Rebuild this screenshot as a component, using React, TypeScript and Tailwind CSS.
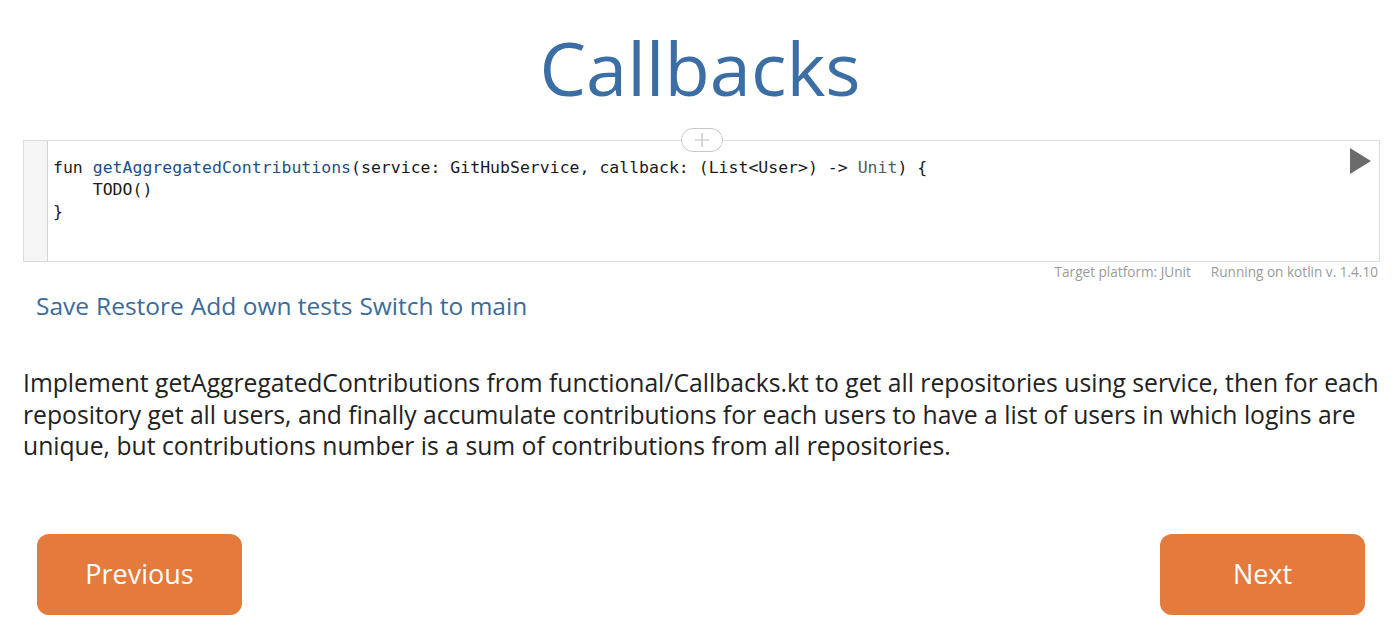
const sans = "font-['Open_Sans',_'Noto_Sans',_sans-serif]";
const mono = "font-['DejaVu_Sans_Mono',_'Liberation_Mono',_monospace]";

function CodeEditor() {
  return (
    <div className="relative">
      <div className="relative flex h-[122px] border border-[#dcdcdc] bg-white">
        {/* gutter */}
        <div className="w-[24px] shrink-0 border-r border-[#d4d4d4] bg-[#f5f5f5]" />
        <pre className={`${mono} pl-[5px] pt-[16px] text-[16.5px] leading-[22px] text-[#1a1a1a]`}>
          <span>fun </span>
          <span className="text-[#1f4f86]">getAggregatedContributions</span>
          <span>(service: GitHubService, callback: (List&lt;User&gt;) -&gt; </span>
          <span className="text-[#555a66]">Unit</span>
          <span>{') {'}</span>
          {'\n    TODO()\n}'}
        </pre>
        {/* run button */}
        <svg className="absolute right-[7px] top-[6px]" width="24" height="28" viewBox="0 0 24 28">
          <polygon points="2,1 23,14 2,27" fill="#6b6b6b" />
        </svg>
      </div>
      {/* add block button */}
      <div className="absolute left-1/2 top-[-12px] flex h-[24px] w-[42px] -translate-x-1/2 items-center justify-center rounded-full border border-[#c8c8c8] bg-white">
        <svg width="16" height="16" viewBox="0 0 16 16">
          <path d="M8 1v14M1 8h14" stroke="#bdbdbd" strokeWidth="1.2" />
        </svg>
      </div>
      <div className={`${sans} mt-[1px] flex justify-end gap-[20px] pr-[2px] text-[13.6px] leading-[18px] text-[#9a9a9a]`}>
        <span>Target platform: JUnit</span>
        <span>Running on kotlin v. 1.4.10</span>
      </div>
    </div>
  );
}

export default function App() {
  return (
    <div className={`${sans} min-h-[634px] w-[1400px] bg-white`}>
      <h1 className="pt-[20px] text-center text-[74px] leading-[96px] text-[#3b6ea5]">Callbacks</h1>

      <div className="mt-[24px] px-[23px] pr-[20px]">
        <CodeEditor />
      </div>

      <div className="mt-[8px] flex gap-[7px] px-[36px] text-[24.5px] leading-[34px] text-[#3a6b9c]">
        <span>Save</span>
        <span>Restore</span>
        <span>Add own tests</span>
        <span>Switch to main</span>
      </div>

      <p className="mt-[44px] pl-[23px] pr-0 text-[24.7px] leading-[31.5px] text-[#222]">
        Implement getAggregatedContributions from functional/Callbacks.kt to get all repositories using service, then for each
        <br />
        repository get all users, and finally accumulate contributions for each users to have a list of users in which logins are
        <br />
        unique, but contributions number is a sum of contributions from all repositories.
      </p>

      <div className="mt-[72px] flex justify-between px-[37px] pr-[35px]">
        <button className="h-[81px] w-[205px] rounded-[12px] bg-[#e47a3b] text-[27px] text-white">Previous</button>
        <button className="h-[81px] w-[205px] rounded-[12px] bg-[#e47a3b] text-[27px] text-white">Next</button>
      </div>
    </div>
  );
}
